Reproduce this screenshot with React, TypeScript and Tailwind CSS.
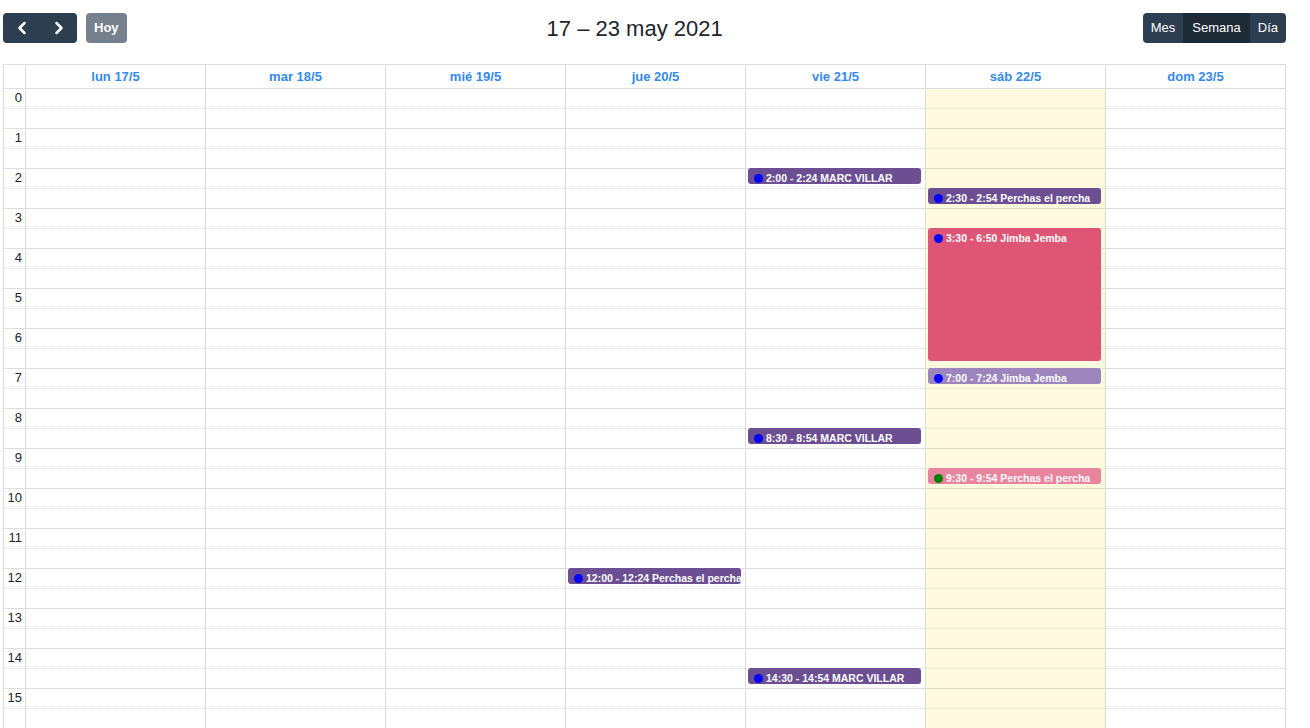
import { ChevronLeft, ChevronRight } from "lucide-react";

type Ev = {
  day: number;
  start: [number, number];
  end: [number, number];
  title: string;
  bg: string;
  dot: string;
};

const days = ["lun 17/5", "mar 18/5", "mié 19/5", "jue 20/5", "vie 21/5", "sáb 22/5", "dom 23/5"];
const TODAY = 5;

const events: Ev[] = [
  { day: 3, start: [12, 0], end: [12, 24], title: "Perchas el percha", bg: "bg-[#6b4f92]", dot: "bg-[#0000ff]" },
  { day: 4, start: [2, 0], end: [2, 24], title: "MARC VILLAR", bg: "bg-[#6b4f92]", dot: "bg-[#0000ff]" },
  { day: 4, start: [8, 30], end: [8, 54], title: "MARC VILLAR", bg: "bg-[#6b4f92]", dot: "bg-[#0000ff]" },
  { day: 4, start: [14, 30], end: [14, 54], title: "MARC VILLAR", bg: "bg-[#6b4f92]", dot: "bg-[#0000ff]" },
  { day: 5, start: [2, 30], end: [2, 54], title: "Perchas el percha", bg: "bg-[#6b4f92]", dot: "bg-[#0000ff]" },
  { day: 5, start: [3, 30], end: [6, 50], title: "Jimba Jemba", bg: "bg-[#df5575]", dot: "bg-[#0000ff]" },
  { day: 5, start: [7, 0], end: [7, 24], title: "Jimba Jemba", bg: "bg-[#9d85be]", dot: "bg-[#0000ff]" },
  { day: 5, start: [9, 30], end: [9, 54], title: "Perchas el percha", bg: "bg-[#e9849e]", dot: "bg-[#008000]" },
];

const fmt = (t: [number, number]) => `${t[0]}:${String(t[1]).padStart(2, "0")}`;
const toPx = (t: [number, number]) => t[0] * 40 + (t[1] * 40) / 60;

function Toolbar() {
  return (
    <div className="flex h-[30px] items-center justify-between text-[13px] text-white">
      <div className="flex h-full items-center gap-[9px]">
        <div className="flex h-full overflow-hidden rounded-[4px] bg-[#2c3e50]">
          <button className="flex w-[37px] items-center justify-center">
            <ChevronLeft size={20} strokeWidth={3} />
          </button>
          <button className="flex w-[37px] items-center justify-center">
            <ChevronRight size={20} strokeWidth={3} />
          </button>
        </div>
        <button className="h-full rounded-[4px] bg-[#76818d] px-[8px] font-bold">Hoy</button>
      </div>
      <h2 className="text-[22px] text-[#212529]">17 – 23 may 2021</h2>
      <div className="flex h-full overflow-hidden rounded-[4px] bg-[#2c3e50]">
        <button className="px-[8px]">Mes</button>
        <button className="bg-[#1e2b37] px-[9px]">Semana</button>
        <button className="px-[8px]">Día</button>
      </div>
    </div>
  );
}

function EventBox({ ev }: { ev: Ev }) {
  const top = toPx(ev.start) - 1;
  const height = toPx(ev.end) - toPx(ev.start);
  return (
    <div
      className={`absolute left-[2px] right-[4px] overflow-hidden rounded-[3px] ${ev.bg} text-[10.5px] font-bold leading-[14px] text-white`}
      style={{ top, height }}
    >
      <div className="flex items-center whitespace-nowrap pt-[3px]">
        <span className={`ml-[6px] mr-[3px] h-[9px] w-[9px] shrink-0 rounded-full ${ev.dot}`} />
        <span>
          {fmt(ev.start)} - {fmt(ev.end)} {ev.title}
        </span>
      </div>
    </div>
  );
}

export default function App() {
  const hours = Array.from({ length: 16 }, (_, i) => i);
  return (
    <div className="h-[728px] overflow-hidden bg-white font-['Liberation_Sans',Arial,sans-serif]">
      <div className="ml-[3px] w-[1283px] pt-[13px]">
        <Toolbar />

        <div className="mt-[21px] border border-[#ddd]">
          {/* header */}
          <div className="grid h-[24px] grid-cols-[21px_repeat(7,180px)] border-b border-[#ddd]">
            <div />
            {days.map((d) => (
              <div
                key={d}
                className="flex items-center justify-center border-l border-[#ddd] text-[13px] font-bold text-[#3389ec]"
              >
                {d}
              </div>
            ))}
          </div>

          {/* body */}
          <div className="relative">
            {hours.map((h) => (
              <div key={h}>
                <div className="flex h-5 border-b border-dotted border-[#ddd]">
                  <div className="w-[21px] pr-[3px] text-right text-[13px] leading-[18px] text-[#212529]">{h}</div>
                </div>
                <div className="h-5 border-b border-[#ddd]" />
              </div>
            ))}

            <div className="absolute inset-0 grid grid-cols-[21px_repeat(7,180px)]">
              <div />
              {days.map((d, i) => (
                <div
                  key={d}
                  className={`relative border-l border-[#ddd] ${i === TODAY ? "bg-[rgba(255,220,40,0.15)]" : ""}`}
                >
                  {events
                    .filter((e) => e.day === i)
                    .map((e, k) => (
                      <EventBox key={k} ev={e} />
                    ))}
                </div>
              ))}
            </div>
          </div>
        </div>
      </div>
    </div>
  );
}
